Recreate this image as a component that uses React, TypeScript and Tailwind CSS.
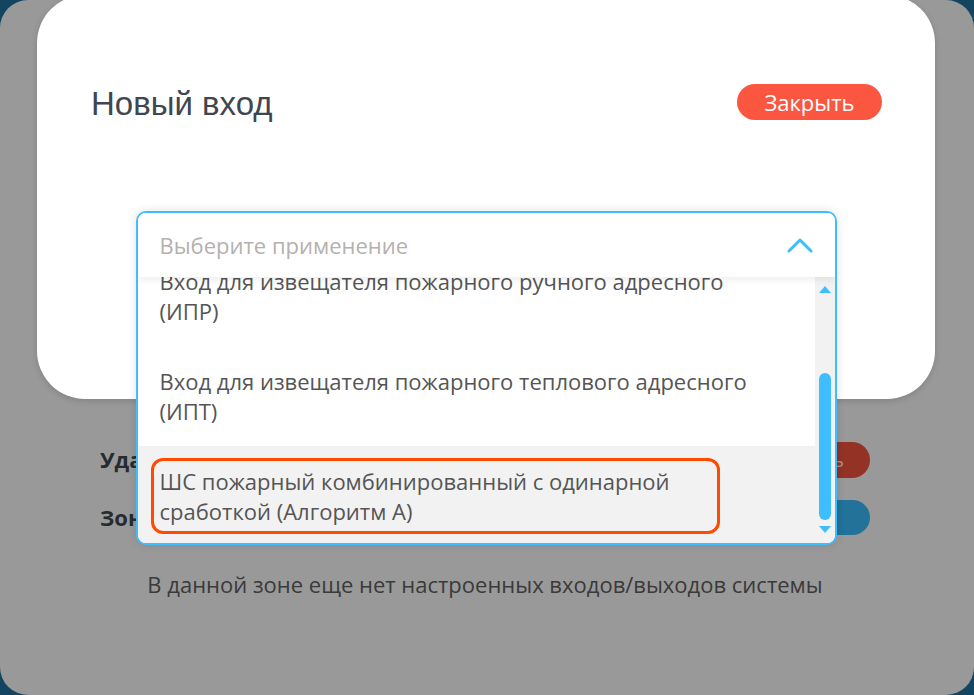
import { useState } from "react";

const options = [
  "Вход для извещателя пожарного ручного адресного (ИПР)",
  "Вход для извещателя пожарного теплового адресного (ИПТ)",
  "ШС пожарный комбинированный с одинарной сработкой (Алгоритм А)",
];

function Select() {
  const [active] = useState(2);
  return (
    <div className="w-[701px] mx-auto mt-[89px] rounded-[10px] border-2 border-[#3ebdff] bg-white shadow-[0_0_10px_rgba(0,0,0,0.12)] overflow-hidden relative z-10">
      <div className="h-[64px] pl-[22px] pr-[22px] flex items-center justify-between shadow-[0_4px_6px_rgba(0,0,0,0.06)] relative z-10 bg-white">
        <span className="text-[22px] text-[#b5b1ae]">Выберите применение</span>
        <svg width="26" height="16" viewBox="0 0 26 16" fill="none">
          <polyline points="2,14 13,3 24,14" stroke="#3ebdff" strokeWidth="3" strokeLinecap="round" strokeLinejoin="round" />
        </svg>
      </div>
      <div className="flex h-[266px]">
        <div className="flex-1 overflow-hidden">
          <div className="mt-[-31px]">
            {options.map((o, i) => (
              <div
                key={o}
                className={`relative h-[100px] pl-[22px] pr-[45px] pt-[20px] text-[22px] leading-[30px] text-[#555555] ${i === active ? "bg-[#f2f2f2]" : "bg-white"}`}
              >
                {o}
                {i === active && (
                  <div className="absolute left-[13px] top-[12px] w-[569px] h-[76px] rounded-[12px] border-[3px] border-[#ff4a00]" />
                )}
              </div>
            ))}
          </div>
        </div>
        <div className="w-[20px] bg-[#f2f2f2] flex flex-col items-center pt-[9px] pb-[10px]">
          <div className="w-0 h-0 border-l-[6px] border-r-[6px] border-b-[7px] border-l-transparent border-r-transparent border-b-[#3ebdff]" />
          <div className="flex-1 w-full flex flex-col items-center pt-[80px] pb-[6px]">
            <div className="w-[12px] flex-1 rounded-full bg-[#3ebdff]" />
          </div>
          <div className="w-0 h-0 border-l-[6px] border-r-[6px] border-t-[7px] border-l-transparent border-r-transparent border-t-[#3ebdff]" />
        </div>
      </div>
    </div>
  );
}

export default function App() {
  return (
    <div className="w-[974px] h-[695px] bg-[#134561] overflow-hidden" style={{ fontFamily: '"Open Sans", "Noto Sans", sans-serif' }}>
      <div className="relative w-full h-full rounded-[28px] bg-[#999999] overflow-hidden">
        {/* page behind the modal, dimmed */}
        <div className="pt-[441px] pl-[100px] pr-[104px] flex flex-col">
          <div className="flex items-center justify-between h-[37px]">
            <span className="text-[22px] font-bold text-[#262b30]">Удалить зону</span>
            <span className="h-[36px] w-[160px] rounded-full bg-[#943226] text-[#b08a84] text-[20px] flex items-center justify-end pr-[26px]">Удалить</span>
          </div>
          <div className="flex items-center justify-between h-[37px] mt-[21px]">
            <span className="text-[22px] font-bold text-[#262b30]">Зона</span>
            <span className="h-[35px] w-[160px] rounded-full bg-[#22729a]" />
          </div>
          <p className="mt-[32px] text-center text-[22px] text-[#3a3a3a]">
            В данной зоне еще нет настроенных входов/выходов системы
          </p>
        </div>

        {/* modal */}
        <div className="absolute left-[37px] top-[-5px] w-[898px] h-[404px] rounded-[48px] bg-white shadow-[0_2px_6px_rgba(0,0,0,0.15)]">
          <div className="flex items-start justify-between pl-[54px] pr-[53px] pt-[90px]">
            <h1 className="text-[33px] leading-[37px] text-[#3f4650]" style={{ fontFamily: '"Liberation Sans", Arial, sans-serif' }}>
              Новый вход
            </h1>
            <button className="mt-[-1px] h-[36px] w-[145px] rounded-full bg-[#fa5640] text-white text-[22px] flex items-center justify-center">
              Закрыть
            </button>
          </div>
          <Select />
        </div>
      </div>
    </div>
  );
}
